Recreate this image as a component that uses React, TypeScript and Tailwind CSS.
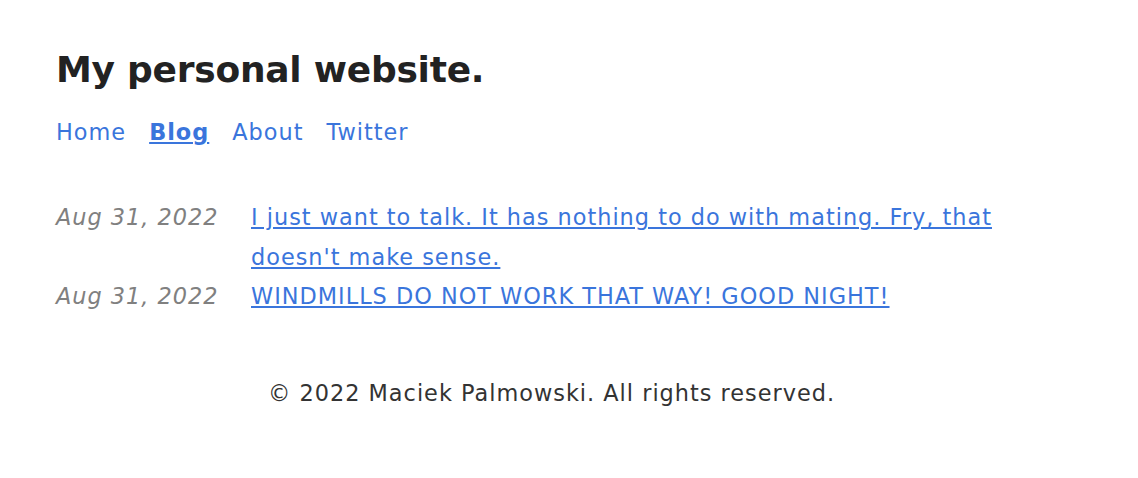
import React from 'react';

const posts = [
  { date: 'Aug 31, 2022', title: "I just want to talk. It has nothing to do with mating. Fry, that doesn't make sense." },
  { date: 'Aug 31, 2022', title: 'WINDMILLS DO NOT WORK THAT WAY! GOOD NIGHT!' },
];

const App: React.FC = () => {
  return (
    <div className="min-h-screen bg-white font-['DejaVu_Sans',sans-serif] text-[22.4px] leading-[1.75] tracking-[1px] text-[#333]">
      <div className="w-[1047px] pl-14 pt-[48px]">
        <h1 className="text-[36px] font-bold leading-[1.2] tracking-[-0.25px] text-[#222]">My personal website.</h1>

        <nav className="mt-[22px] flex gap-[23px] text-[#3a75dc]">
          <a href="#">Home</a>
          <a href="#" className="font-bold underline">Blog</a>
          <a href="#">About</a>
          <a href="#">Twitter</a>
        </nav>

        <ul className="mt-[46px]">
          {posts.map((post, idx) => (
            <li key={idx} className="flex">
              <span className="w-[195px] shrink-0 italic text-[#808080]">{post.date}</span>
              <a href="#" className="text-[#3a75dc] underline">{post.title}</a>
            </li>
          ))}
        </ul>

        <footer className="mt-[58px] text-center text-[#333]">
          © 2022 Maciek Palmowski. All rights reserved.
        </footer>
      </div>
    </div>
  );
};

export default App;
